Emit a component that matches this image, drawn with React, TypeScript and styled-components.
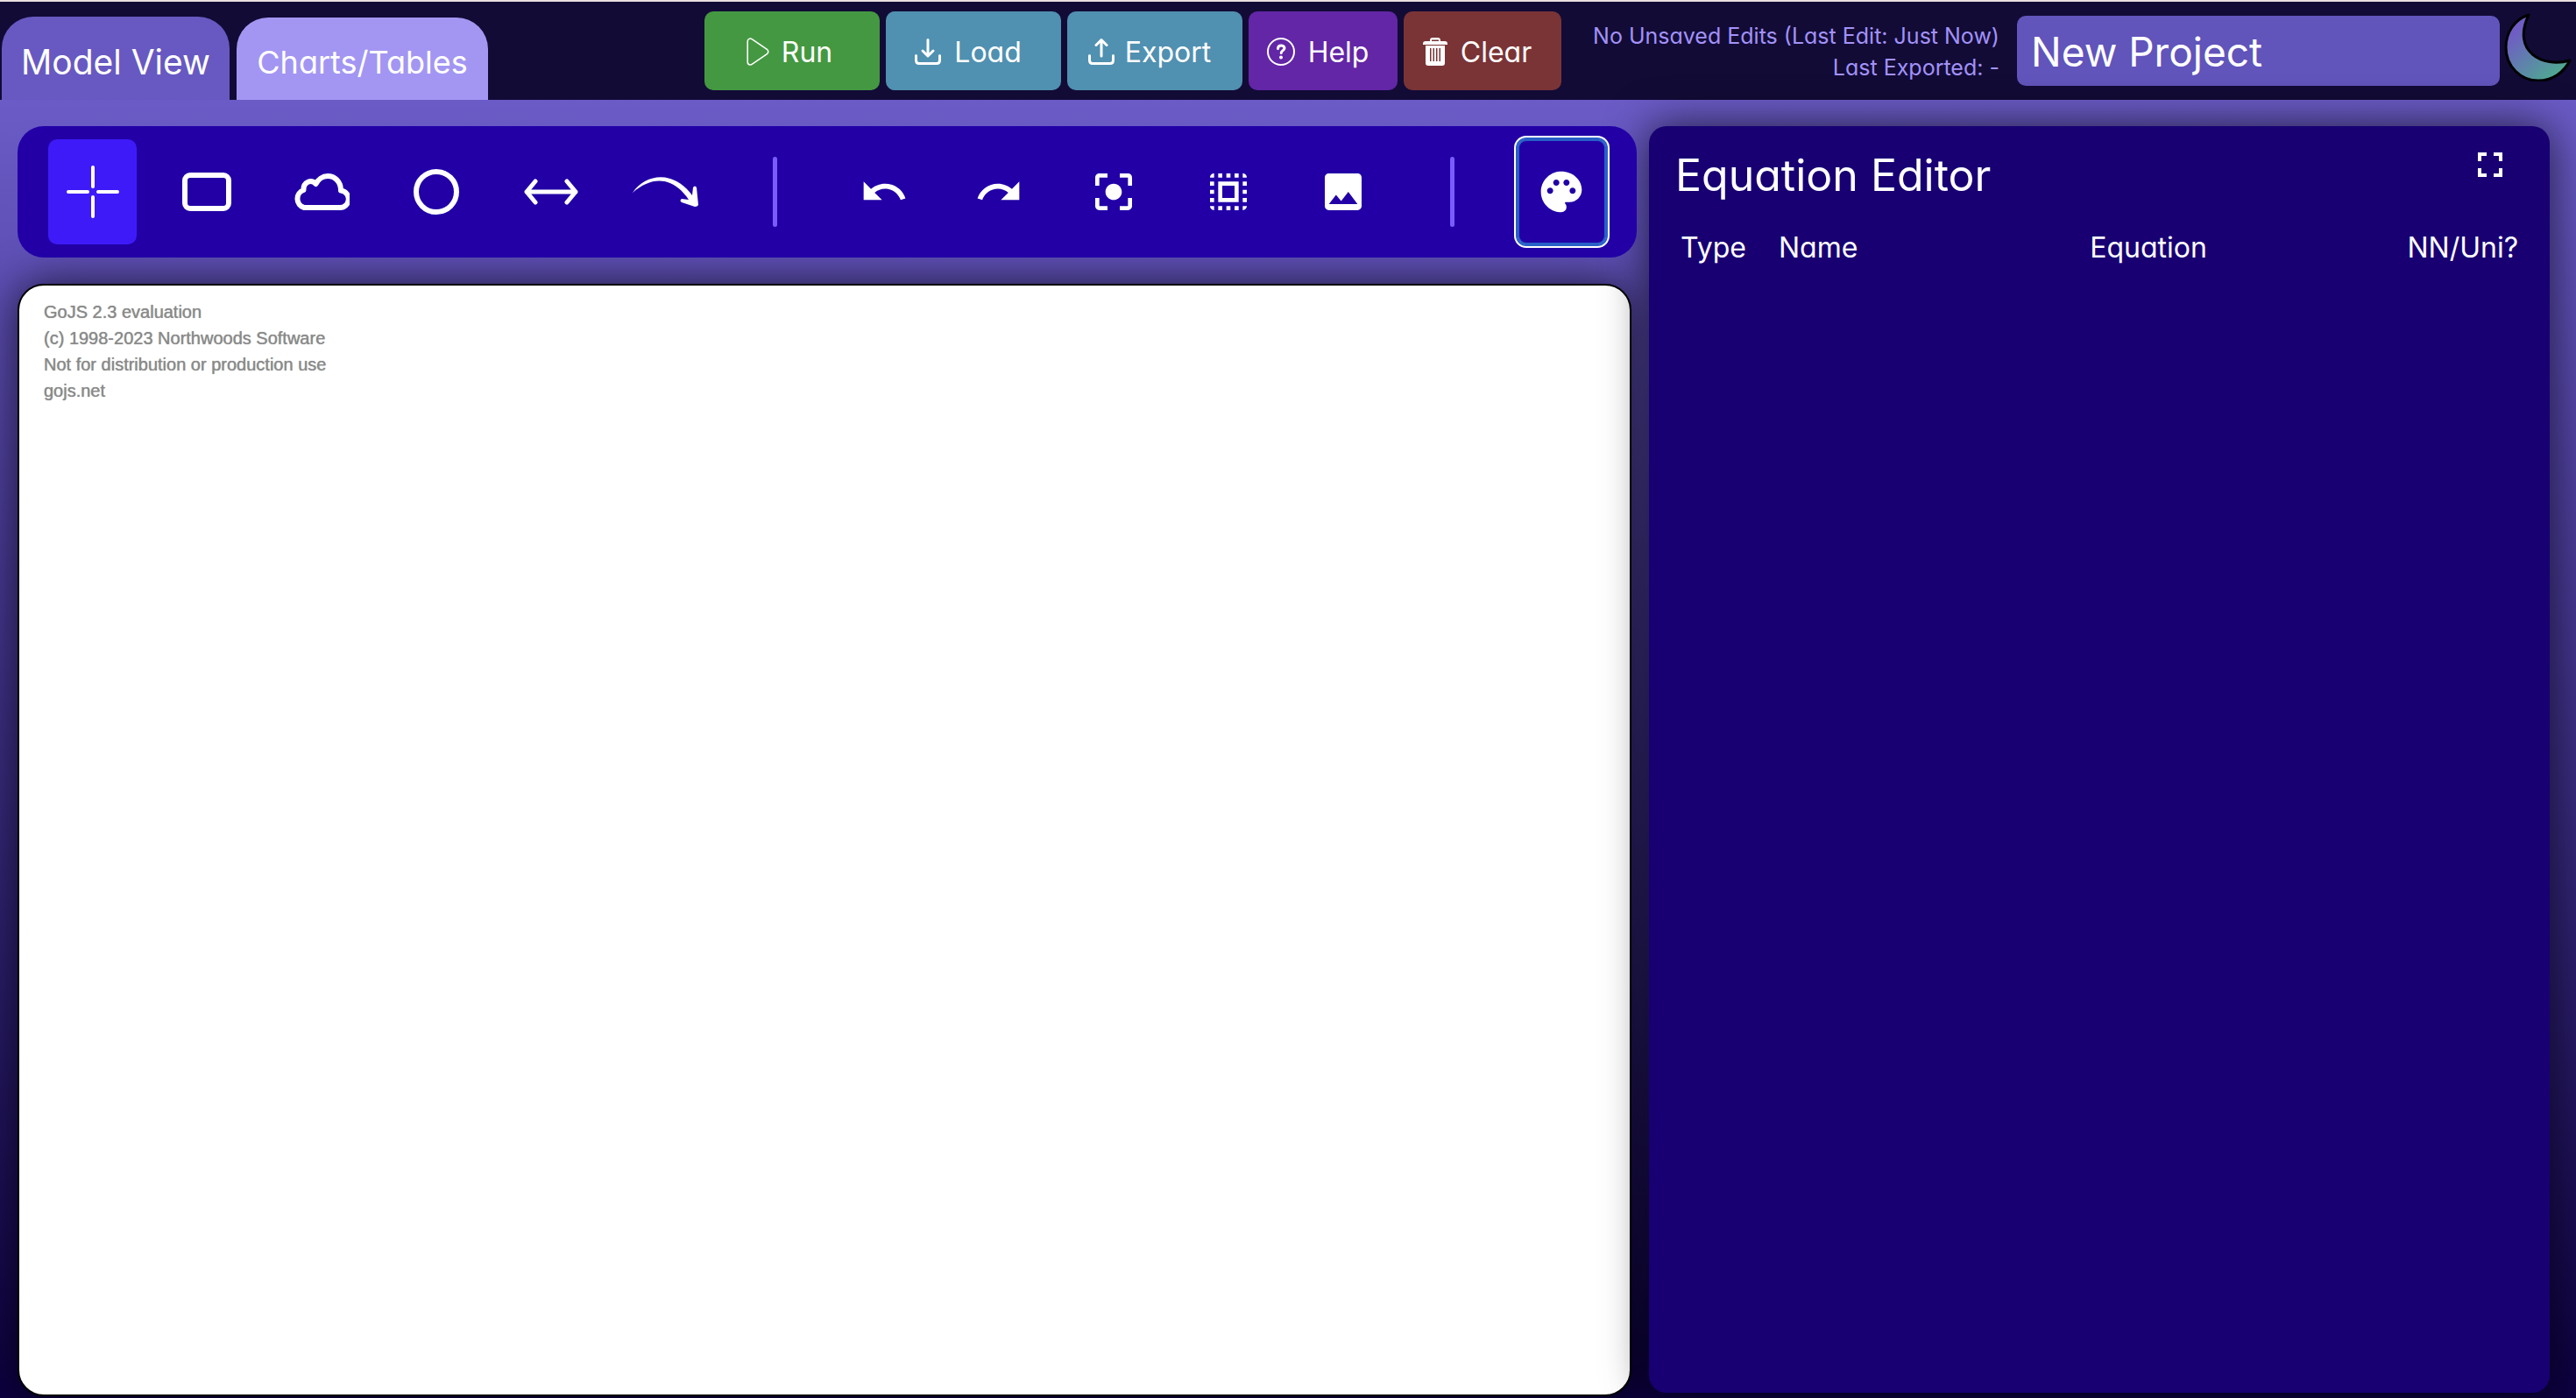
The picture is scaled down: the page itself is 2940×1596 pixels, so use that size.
import React from "react";
import styled, { createGlobalStyle } from "styled-components";
import {
  MdUndo,
  MdRedo,
  MdCenterFocusStrong,
  MdSelectAll,
  MdImage,
  MdPalette,
  MdFullscreen,
} from "react-icons/md";
import { CiPlay1 } from "react-icons/ci";

const GlobalStyle = createGlobalStyle`
  *, *::before, *::after { box-sizing: border-box; }
  body {
    margin: 0;
    font-family: Inter, "Liberation Sans", sans-serif;
    font-feature-settings: "cv11";
    color: #ffffff;
  }
  button, input { font: inherit; font-feature-settings: inherit; color: inherit; }
  button { border: 0; padding: 0; cursor: pointer; }
  svg { display: block; flex: none; }
`;

const Page = styled.div`
  display: flex;
  flex-direction: column;
  min-height: 100vh;
  border-top: 2px solid #ebdfe1;
  background: #120b36;
`;

const Header = styled.header`
  display: flex;
  height: 112px;
  padding-left: 2px;
`;

const Tabs = styled.nav`
  display: flex;
  align-items: flex-end;
  gap: 8px;
`;

const Tab = styled.button<{ $active?: boolean }>`
  width: ${(p) => (p.$active ? 260 : 287)}px;
  height: ${(p) => (p.$active ? 95 : 94)}px;
  padding-top: 8px;
  border-radius: 36px 36px 0 0;
  background: ${(p) => (p.$active ? "#6759c1" : "#a396f2")};
  font-size: ${(p) => (p.$active ? 39 : 36)}px;
  white-space: nowrap;
`;

const Actions = styled.div`
  display: flex;
  align-items: flex-start;
  gap: 7px;
  margin-left: auto;
  padding-top: 11px;
`;

const ActionButton = styled.button<{ $bg: string; $width: number; $gap: number }>`
  display: flex;
  align-items: center;
  justify-content: center;
  gap: ${(p) => p.$gap}px;
  width: ${(p) => p.$width}px;
  height: 90px;
  padding: 2px 12px 0 0;
  border-radius: 10px;
  background: ${(p) => p.$bg};
  font-size: 32px;
`;

const Status = styled.div`
  margin-left: 36px;
  padding-top: 21px;
  color: #a292f8;
  font-size: 25px;
  line-height: 36px;
  text-align: right;
  white-space: nowrap;
`;

const ProjectName = styled.input`
  width: 551px;
  height: 80px;
  margin: 16px 0 0 20px;
  padding: 2px 16px 0;
  border: 0;
  border-radius: 10px;
  background: #6154bb;
  font-size: 46px;
`;

const ThemeButton = styled.button`
  width: 80px;
  height: 80px;
  margin: 11px 2px 0 5px;
  background: none;
`;

const Main = styled.main`
  flex: 1;
  display: grid;
  grid-template-columns: minmax(0, 1848fr) minmax(0, 1028fr);
  gap: 14px;
  padding: 30px 30px 2px 20px;
  background: linear-gradient(#6a5bc6, #0d0040);
`;

const Workspace = styled.section`
  display: flex;
  flex-direction: column;
  gap: 30px;
`;

const Toolbar = styled.div`
  position: relative;
  z-index: 2;
  display: flex;
  align-items: center;
  justify-content: space-between;
  height: 150px;
  padding: 0 35px;
  border-radius: 30px;
  background: #2200a6;
`;

const Tool = styled.button<{ $active?: boolean; $focused?: boolean }>`
  display: flex;
  align-items: center;
  justify-content: center;
  width: 101px;
  height: 120px;
  border-radius: 10px;
  background: ${(p) => (p.$active ? "#3f1af8" : "transparent")};
  ${(p) =>
    p.$focused &&
    "border: 2px solid #2860c8; box-shadow: 0 0 0 2px #2860c8, 0 0 0 4px #ffffff;"}
`;

const Divider = styled.span`
  width: 5px;
  height: 80px;
  margin: 0 42px;
  border-radius: 3px;
  background: #7a5cfa;
`;

const Diagram = styled.div`
  flex: 1;
  margin-right: 6px;
  padding: 15px 28px;
  border: 2px solid #000000;
  border-radius: 30px;
  background: #ffffff;
  box-shadow: 0 0 50px #000000b0;
  color: #8a8a8a;
  font-family: "Liberation Sans", Arial, sans-serif;
  font-size: 20px;
  line-height: 30px;
  text-shadow: 0 0 1px #8a8a8a;
`;

const Editor = styled.section`
  position: relative;
  z-index: 1;
  margin-bottom: 4px;
  padding: 30px;
  border-radius: 20px;
  background: #180073;
  box-shadow: 0 0 50px #000000b0;
`;

const EditorHead = styled.div`
  display: flex;
  justify-content: space-between;
  align-items: flex-start;
  padding-right: 14px;
`;

const Title = styled.h1`
  margin: 0;
  font-size: 50px;
  font-weight: 400;
  line-height: 52px;
`;

const IconButton = styled.button`
  margin-top: -10px;
  background: none;
`;

const Table = styled.table`
  width: 100%;
  margin-top: 32px;
  border-collapse: collapse;
  table-layout: fixed;
  font-size: 32px;
  line-height: 50px;
`;

const Th = styled.th<{ $align: string; $width?: string }>`
  width: ${(p) => p.$width ?? "auto"};
  padding: 0 6px;
  font-weight: 400;
  text-align: ${(p) => p.$align};
`;

const Line = ({ children, w, h, sw }: { children: React.ReactNode; w: number; h: number; sw: number }) => (
  <svg width={w} height={h} viewBox={`0 0 ${w} ${h}`} fill="none" stroke="currentColor" strokeWidth={sw} strokeLinecap="round" strokeLinejoin="round" aria-hidden="true">
    {children}
  </svg>
);

const TRAY = "M1.500 19.500V25q0 3.500 3.500 3.500H25q3.500 0 3.500-3.500V19.500";

const LoadIcon = () => (
  <Line w={30} h={30} sw={3}>
    <path d={TRAY} />
    <path d="M15 1.500V19M9 14l6 6 6-6" />
  </Line>
);

const ExportIcon = () => (
  <Line w={30} h={30} sw={3}>
    <path d={TRAY} />
    <path d="M15 20V2M9 7.500l6-6 6 6" />
  </Line>
);

const HelpIcon = () => (
  <Line w={32} h={32} sw={2}>
    <circle cx="16" cy="16" r="15" />
    <path strokeWidth="3" d="M12.500 12.500c0-5 7.500-4.500 7.500-.5 0 2.500-3.800 2.800-3.800 5.500" />
    <circle cx="16" cy="22.500" r="1" />
  </Line>
);

const TrashIcon = () => (
  <svg width="28" height="32" viewBox="0 0 28 32" fill="currentColor" fillRule="evenodd" aria-hidden="true">
    <path d="M8 4V3q0-3 3-3h6q3 0 3 3v1h5q3 0 3 3v1H0V7q0-3 3-3ZM10 4h8V2.500h-8Z" />
    <path d="M3 9h22v20q0 3-3 3H6q-3 0-3-3ZM8 12v15h1.500V12ZM11.500 12v15H13V12ZM15 12v15h1.500V12ZM18.500 12v15H20V12Z" />
  </svg>
);

const Moon = () => (
  <svg width="80" height="80" viewBox="0 0 80 80" aria-hidden="true">
    <defs>
      <linearGradient id="moonFill" x1="0.200" y1="0.200" x2="0.800" y2="0.900">
        <stop offset="0" stopColor="#6f5cc4" />
        <stop offset="1" stopColor="#4fa892" />
      </linearGradient>
    </defs>
    <path d="M28 4C12 9 2 24 2 41c0 22 17 38 37 38 16 0 29-9 36-23C44 65 8 46 28 4Z" fill="url(#moonFill)" stroke="#000" strokeWidth="3" strokeLinejoin="round" />
  </svg>
);

const drawingTools = [
  { name: "Select", icon: <Line w={60} h={60} sw={4}><path d="M30 2v22M30 36v22M2 30h22M36 30h22" /></Line> },
  { name: "Stock", icon: <Line w={58} h={46} sw={6}><rect x="4" y="4" width="50" height="38" rx="6" /></Line> },
  { name: "Cloud", icon: <Line w={64} h={42} sw={6}><path d="M12 39H52A9.500 9.500 0 0 0 54 19.500C54 9 47 3 39 3c-6 0-11 4-13.500 9C20 6 11 10 11.500 19A10.500 10.500 0 0 0 12 39Z" /></Line> },
  { name: "Variable", icon: <Line w={52} h={52} sw={6}><circle cx="26" cy="26" r="23" /></Line> },
  { name: "Flow", icon: <Line w={62} h={30} sw={5}><path d="M3 15h56M13 3 3 15l10 12M49 3 59 15 49 27" /></Line> },
  {
    name: "Influence",
    icon: (
      <svg width="76" height="34" viewBox="0 0 76 34" fill="currentColor" aria-hidden="true">
        <path d="M0 18C16-5 48-7 68 21L69 12q2-3 4 0l2 20q-1 2-4 2L56 29q-3-2 0-4l8 1C46-1 22-1 0 18Z" />
      </svg>
    ),
  },
];

const viewTools = [
  { name: "Undo", icon: <MdUndo size={56} /> },
  { name: "Redo", icon: <MdRedo size={56} /> },
  { name: "Center", icon: <MdCenterFocusStrong size={56} /> },
  { name: "Select all", icon: <MdSelectAll size={56} /> },
  { name: "Save image", icon: <MdImage size={56} /> },
];

const actions = [
  { label: "Run", bg: "#449841", width: 200, gap: 8, icon: <CiPlay1 size={38} /> },
  { label: "Load", bg: "#5090b0", width: 200, gap: 15, icon: <LoadIcon /> },
  { label: "Export", bg: "#5090b0", width: 200, gap: 12, icon: <ExportIcon /> },
  { label: "Help", bg: "#6226a6", width: 170, gap: 15, icon: <HelpIcon /> },
  { label: "Clear", bg: "#7a3436", width: 180, gap: 15, icon: <TrashIcon /> },
];

const notice = [
  "GoJS 2.3 evaluation",
  "(c) 1998-2023 Northwoods Software",
  "Not for distribution or production use",
  "gojs.net",
];

export default function App() {
  return (
    <Page>
      <GlobalStyle />
      <Header>
        <Tabs>
          <Tab $active>Model View</Tab>
          <Tab>Charts/Tables</Tab>
        </Tabs>
        <Actions>
          {actions.map((a) => (
            <ActionButton key={a.label} $bg={a.bg} $width={a.width} $gap={a.gap}>
              {a.icon}
              {a.label}
            </ActionButton>
          ))}
        </Actions>
        <Status>
          <div>No Unsaved Edits (Last Edit: Just Now)</div>
          <div>Last Exported: -</div>
        </Status>
        <ProjectName aria-label="Project name" defaultValue="New Project" />
        <ThemeButton aria-label="Toggle theme">
          <Moon />
        </ThemeButton>
      </Header>
      <Main>
        <Workspace>
          <Toolbar role="toolbar">
            {drawingTools.map((t, i) => (
              <Tool key={t.name} aria-label={t.name} $active={i === 0}>
                {t.icon}
              </Tool>
            ))}
            <Divider />
            {viewTools.map((t) => (
              <Tool key={t.name} aria-label={t.name}>
                {t.icon}
              </Tool>
            ))}
            <Divider />
            <Tool aria-label="Colors" $focused>
              <MdPalette size={56} />
            </Tool>
          </Toolbar>
          <Diagram>
            {notice.map((n) => (
              <div key={n}>{n}</div>
            ))}
          </Diagram>
        </Workspace>
        <Editor>
          <EditorHead>
            <Title>Equation Editor</Title>
            <IconButton aria-label="Expand editor">
              <MdFullscreen size={48} />
            </IconButton>
          </EditorHead>
          <Table>
            <thead>
              <tr>
                <Th $align="left" $width="112px">Type</Th>
                <Th $align="left" $width="200px">Name</Th>
                <Th $align="center">Equation</Th>
                <Th $align="right" $width="200px">NN/Uni?</Th>
              </tr>
            </thead>
          </Table>
        </Editor>
      </Main>
    </Page>
  );
}
